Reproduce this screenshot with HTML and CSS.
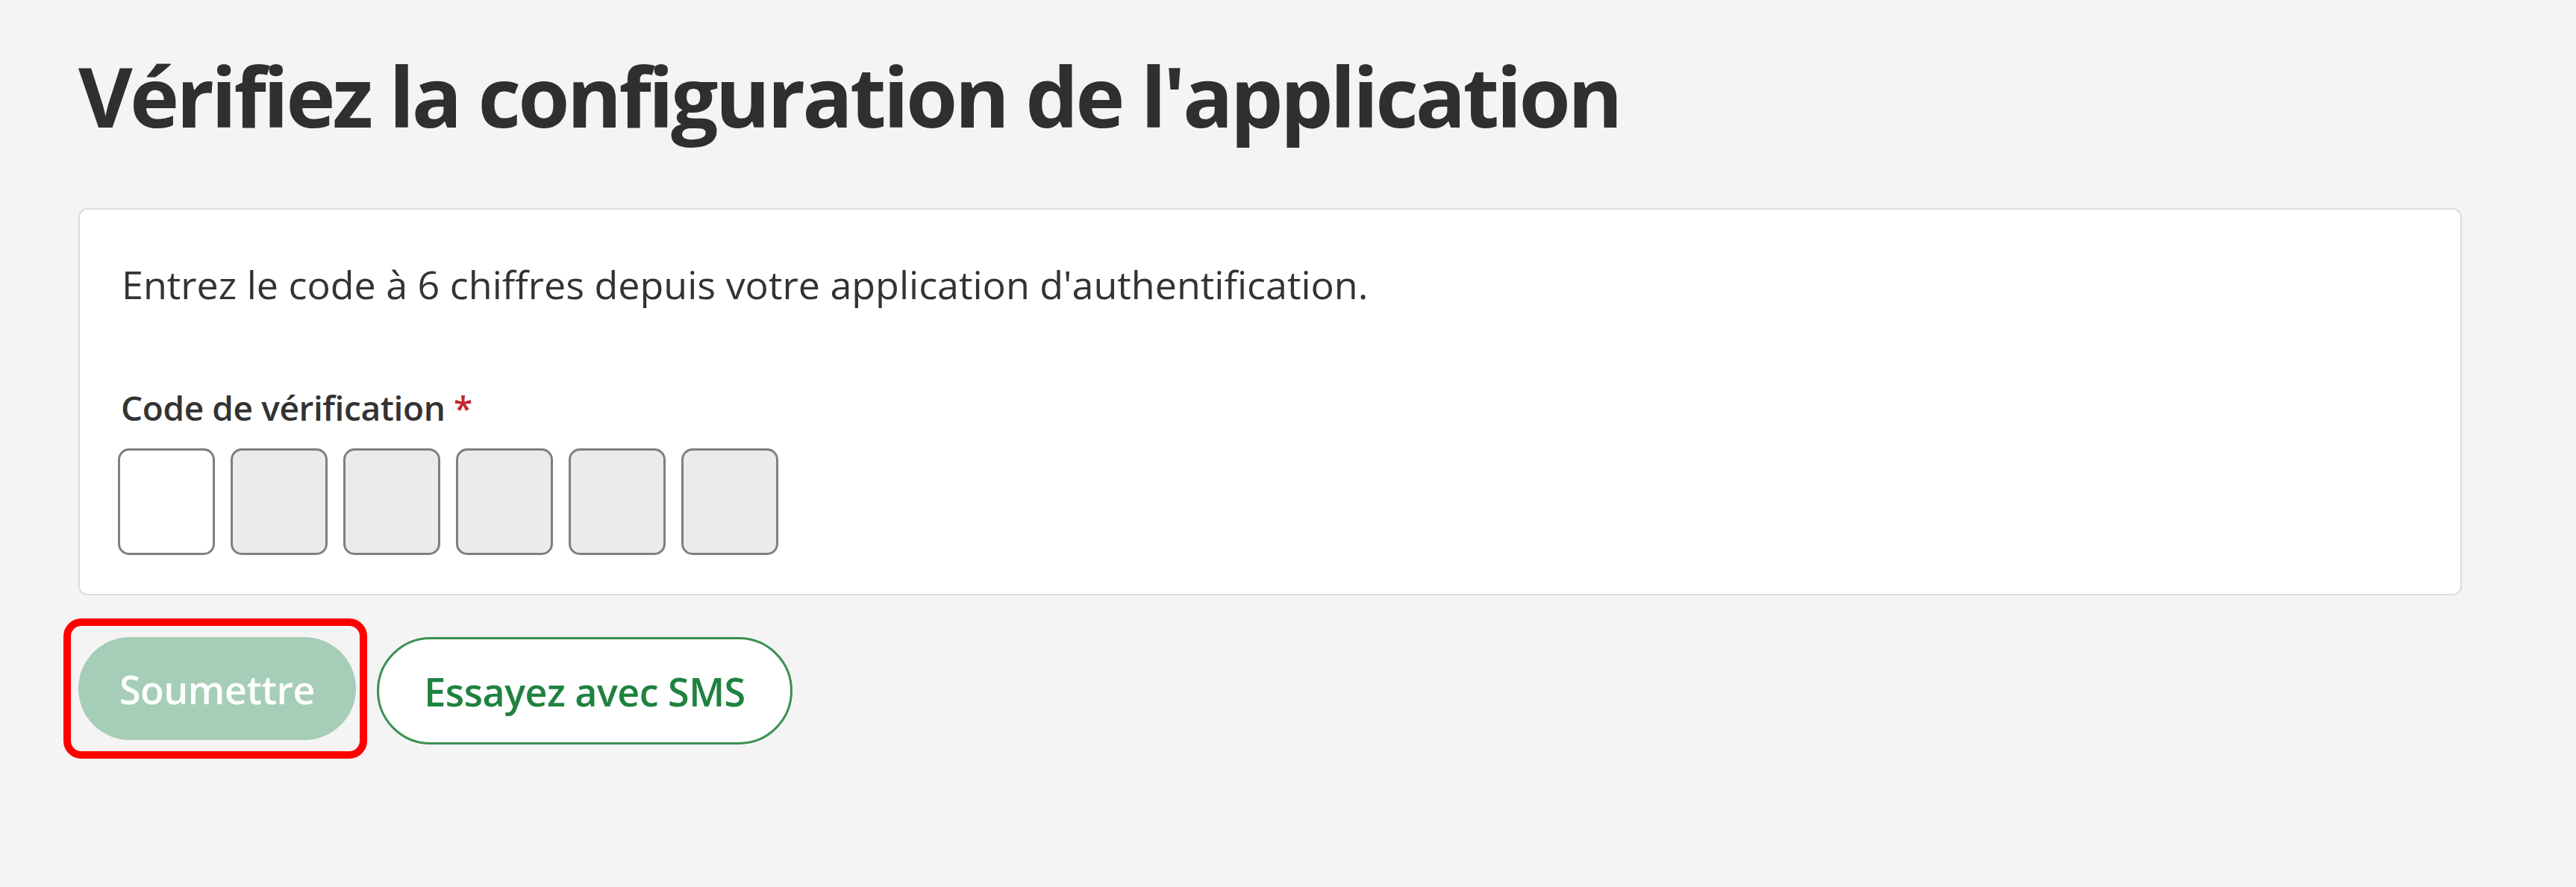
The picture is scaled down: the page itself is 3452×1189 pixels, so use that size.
FILE: index.html
```html
<!DOCTYPE html>
<html lang="fr">
<head>
<meta charset="utf-8">
<title>Vérifiez la configuration de l'application</title>
<link rel="stylesheet" href="styles.css">
</head>
<body>
<main class="page">
  <h1 class="title">Vérifiez la configuration de l'application</h1>
  <section class="card">
    <p class="intro">Entrez le code à 6 chiffres depuis votre application d'authentification.</p>
    <label class="label" for="d1">Code de vérification <span class="req">*</span></label>
    <div class="otp">
      <input id="d1" class="digit active" type="text" maxlength="1">
      <input class="digit" type="text" maxlength="1" disabled>
      <input class="digit" type="text" maxlength="1" disabled>
      <input class="digit" type="text" maxlength="1" disabled>
      <input class="digit" type="text" maxlength="1" disabled>
      <input class="digit" type="text" maxlength="1" disabled>
    </div>
  </section>
  <div class="actions">
    <div class="highlight">
      <button class="btn btn-primary" type="button" disabled>Soumettre</button>
    </div>
    <button class="btn btn-outline" type="button">Essayez avec SMS</button>
  </div>
</main>
</body>
</html>
```
FILE: styles.css
```css
html, body {
  margin: 0;
  padding: 0;
  background: #f4f4f4;
}

body {
  min-height: 1189px;
  font-family: "Open Sans", "Noto Sans", sans-serif;
  color: #333333;
}

.page {
  padding: 61px 0 160px 105px;
  width: 3194px;
}

.title {
  margin: 0;
  font-size: 112px;
  line-height: 134px;
  font-weight: 700;
  letter-spacing: -3.9px;
  color: #2f2f2f;
}

.card {
  margin-top: 84px;
  background: #ffffff;
  border: 2px solid #dcdcdc;
  border-radius: 12px;
  padding: 61px 51px 52px 51px;
}

.intro {
  margin: 0 0 0 5px;
  font-size: 52px;
  line-height: 78px;
  color: #333333;
}

.label {
  display: block;
  margin: 92px 0 0 4px;
  font-size: 46px;
  line-height: 69px;
  font-weight: 600;
  letter-spacing: -0.4px;
  color: #333333;
}

.req {
  color: #c4262e;
}

.otp {
  display: flex;
  gap: 21px;
  margin-top: 20px;
}

.digit {
  box-sizing: border-box;
  width: 130px;
  height: 143px;
  margin: 0;
  padding: 0;
  border: 3px solid #7f7f7f;
  border-radius: 15px;
  background: #ebebeb;
  font: inherit;
  font-size: 52px;
  text-align: center;
}

.digit.active {
  background: #ffffff;
}

.actions {
  display: flex;
  align-items: flex-start;
  gap: 28px;
  margin-top: 56px;
}

.highlight {
  position: relative;
  display: flex;
}

.highlight::after {
  content: "";
  position: absolute;
  left: -20px;
  top: -25px;
  right: -15px;
  bottom: -25px;
  border: 10px solid #ff0000;
  border-radius: 24px;
  pointer-events: none;
}

.btn {
  box-sizing: border-box;
  margin: 0;
  font-family: "Open Sans", "Noto Sans", sans-serif;
  font-size: 52px;
  font-weight: 600;
  letter-spacing: -0.5px;
  border-radius: 999px;
  cursor: pointer;
}

.btn-primary {
  width: 372px;
  height: 138px;
  padding: 0 40px;
  border: none;
  background: #a6cdb7;
  color: #ffffff;
}

.btn-outline {
  width: 557px;
  height: 144px;
  padding: 0 40px;
  border: 3px solid #3a9152;
  background: #ffffff;
  color: #1f8240;
}
```
